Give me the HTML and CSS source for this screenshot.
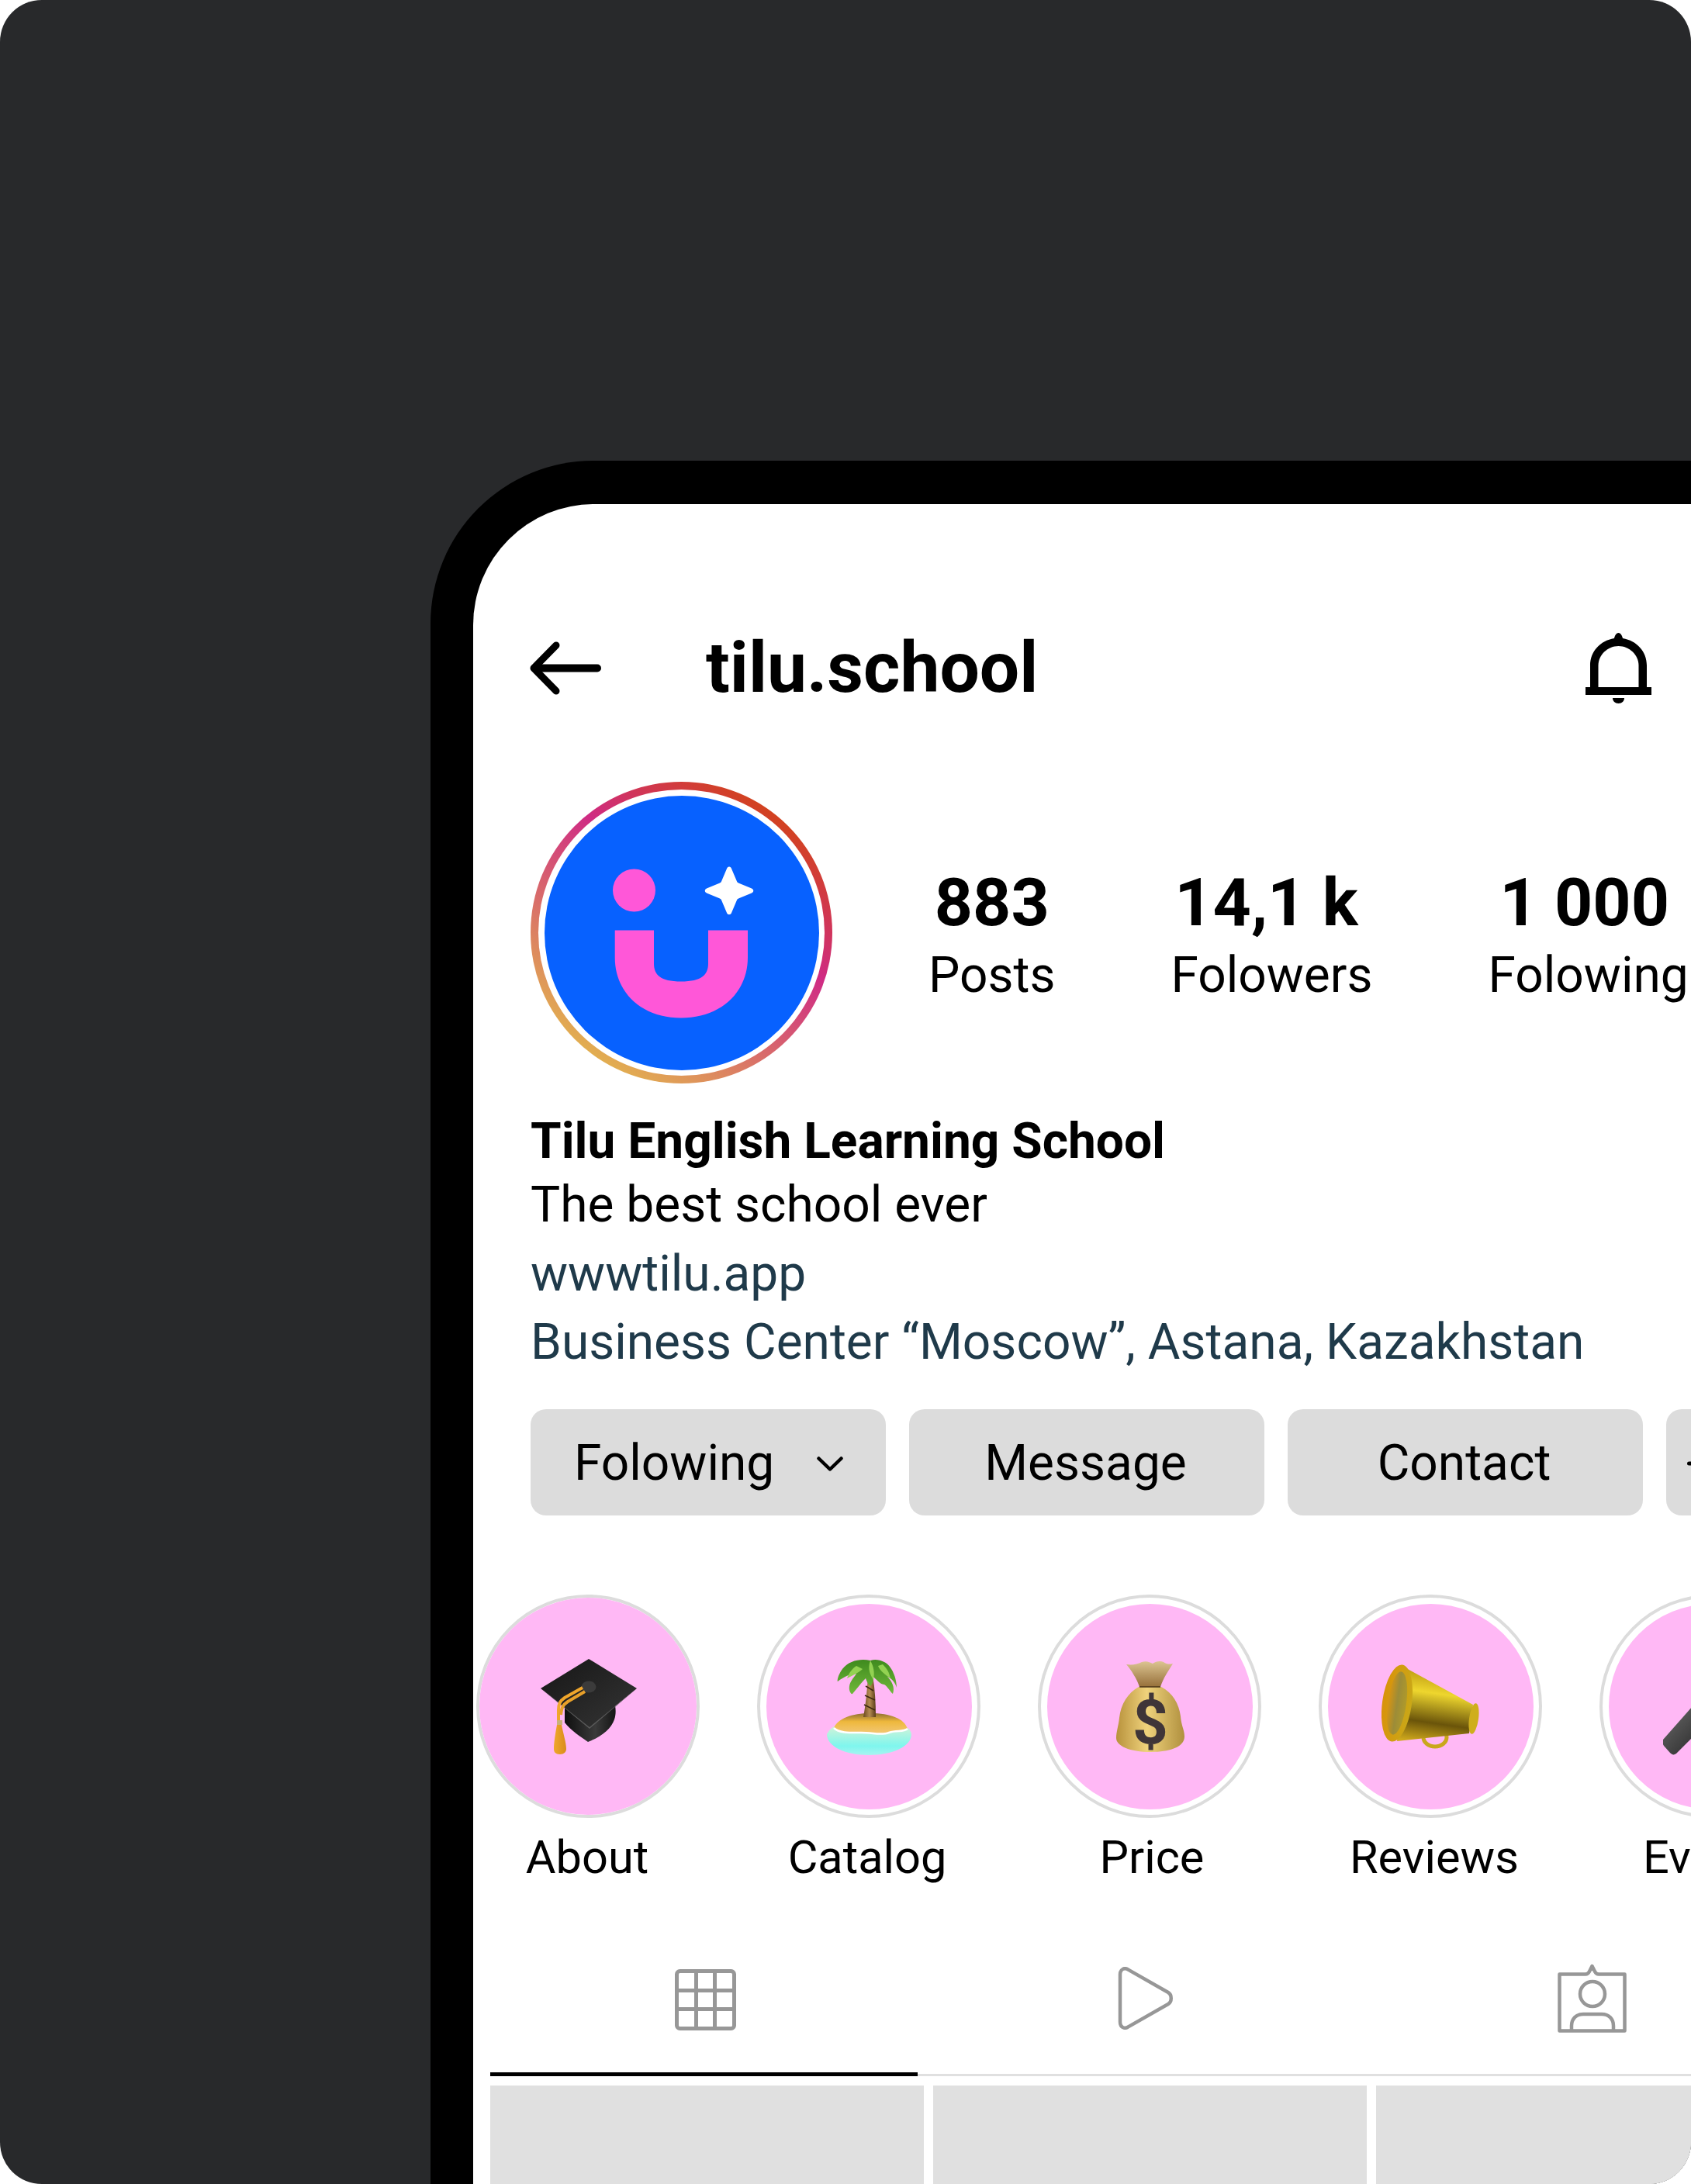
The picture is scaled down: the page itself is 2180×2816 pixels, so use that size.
FILE: index.html
```html
<!DOCTYPE html>
<html lang="en">
<head>
  <meta charset="UTF-8">
  <meta name="viewport" content="width=device-width, initial-scale=1.0">
  <title>tilu.school</title>
  <link rel="stylesheet" href="styles.css">
</head>
<body>
  <div class="stage">
    <div class="phone">
      <div class="screen">

        <div class="topbar">
          <svg class="icon-back" width="92" height="69" viewBox="0 0 92 69" fill="none" stroke="#000" stroke-width="10" stroke-linecap="round" stroke-linejoin="round">
            <path d="M87 34.5H6"/>
            <path d="M34 5L5 34.5L34 64" stroke-width="9"/>
          </svg>
          <h1 class="username">tilu.school</h1>
          <svg class="icon-bell" width="85" height="91" viewBox="0 0 85 91">
            <path d="M42.5 0C45 0 47 3 48 7C66 10 79 24 79 42V70H6V42C6 24 19 10 37 7C38 3 40 0 42.5 0Z" fill="#000"/>
            <path d="M42.5 17C29 17 16.500 28 16.500 42V70H68.500V42C68.500 28 56 17 42.5 17Z" fill="#fff"/>
            <rect x="0" y="70" width="85" height="10" fill="#000"/>
            <path d="M35 84H50C50 88 47 91 42.5 91C38 91 35 88 35 84Z" fill="#000"/>
          </svg>
        </div>

        <div class="profile">
          <div class="avatar-ring">
            <div class="avatar-gap">
              <svg class="avatar" width="354" height="354" viewBox="0 0 354 354">
                <circle cx="177" cy="177" r="177" fill="#0761ff"/>
                <circle cx="115.5" cy="122" r="27.5" fill="#ff57d8"/>
                <g transform="translate(0 -23.5)">
                  <path d="M90.7 197H141V240C141 254 149 263 176 263C203 263 211 254 211 240V197H262V232C262 278 226 310 176 310C126 310 90.7 278 90.7 232Z" fill="#ff57d8"/>
                  <path d="M238 115C239.5 115 240.5 116 241 117.5L248 134C248.5 135 249 135.5 250 136L267 143C270 144.5 270 147.5 267 149L250 156C249 156.5 248.5 157 248 158L241 174.5C240 177.5 236 177.5 235 174.5L228 158C227.5 157 227 156.5 226 156L209 149C206 147.5 206 144.5 209 143L226 136C227 135.5 227.5 135 228 134L235 117.5C235.5 116 236.5 115 238 115Z" fill="#fff"/>
                </g>
              </svg>
            </div>
          </div>
          <div class="stats">
            <div class="stat"><div class="stat-num">883</div><div class="stat-label">Posts</div></div>
            <div class="stat"><div class="stat-num stat-num-followers">14,1 k</div><div class="stat-label">Folowers</div></div>
            <div class="stat"><div class="stat-num stat-num-following">1 000</div><div class="stat-label">Folowing</div></div>
          </div>
        </div>

        <div class="bio">
          <div class="bio-name">Tilu English Learning School</div>
          <div class="bio-line">The best school ever</div>
          <div class="bio-link">wwwtilu.app</div>
          <div class="bio-link">Business Center “Moscow”, Astana, Kazakhstan</div>
        </div>

        <div class="actions">
          <div class="btn btn-drop">Folowing
            <svg width="34" height="19" viewBox="0 0 34 19" fill="none" stroke="#000" stroke-width="4.5" stroke-linecap="round" stroke-linejoin="round"><path d="M2.5 2.5L17 16.5L31.5 2.5"/></svg>
          </div>
          <div class="btn">Message</div>
          <div class="btn">Contact</div>
          <div class="btn btn-more">
            <svg width="44" height="44" viewBox="0 0 44 44" fill="none" stroke="#000" stroke-width="5" stroke-linecap="round"><path d="M2.5 22H41.5M22 2.5V41.5"/></svg>
          </div>
        </div>

        <div class="highlights">
          <div class="story">
            <div class="story-ring story-ring-seen">
              <div class="story-disc">
                <svg width="125" height="123" viewBox="0 0 125 123">
                  <defs>
                    <linearGradient id="capBoard" x1="0" y1="0" x2="1" y2="1"><stop offset="0" stop-color="#161616"/><stop offset="1" stop-color="#353535"/></linearGradient>
                    <linearGradient id="capBase" x1="0" y1="0" x2="1" y2="0"><stop offset="0" stop-color="#0f0f0f"/><stop offset="0.6" stop-color="#3a3a3a"/><stop offset="1" stop-color="#151515"/></linearGradient>
                    <linearGradient id="tassel" x1="0" y1="0" x2="1" y2="0"><stop offset="0" stop-color="#efa72c"/><stop offset="1" stop-color="#d98c1c"/></linearGradient>
                  </defs>
                  <path d="M32 62V82C40 92 52 100 62 107C80 100 92 90 96 78C98 72 98 66 97 60Z" fill="url(#capBase)"/>
                  <path d="M63 0L125 38L64 88L1 38Z" fill="url(#capBoard)"/>
                  <path d="M1 38L64 88L125 38L64 90Z" fill="#5a5a5a"/>
                  <ellipse cx="63" cy="36" rx="9.5" ry="7.5" fill="#3b3b3b"/>
                  <path d="M55 37L32 50C26 54 24 58 24 66V80" fill="none" stroke="#f0a62b" stroke-width="4"/>
                  <path d="M58 42L36 55C30 59 28 62 27 72" fill="none" stroke="#e8a02a" stroke-width="4"/>
                  <rect x="22" y="79" width="7" height="6" fill="#c9b17a"/>
                  <path d="M22 85H28C30 96 34 108 34 116C34 120 31 123 26 123C20 123 18 120 18 116C18 108 20 96 22 85Z" fill="url(#tassel)"/>
                </svg>
              </div>
            </div>
            <div class="story-label story-label-about">About</div>
          </div>
          <div class="story">
            <div class="story-ring">
              <div class="story-disc">
                <svg width="109" height="125" viewBox="0 0 109 125">
                  <defs>
                    <linearGradient id="sand" x1="0" y1="0" x2="0" y2="1"><stop offset="0" stop-color="#8f6f34"/><stop offset="0.4" stop-color="#eeb83c"/><stop offset="1" stop-color="#f3c878"/></linearGradient>
                    <linearGradient id="sea" x1="0" y1="0" x2="0" y2="1"><stop offset="0" stop-color="#d8f3d6"/><stop offset="0.7" stop-color="#7ef6ee"/><stop offset="1" stop-color="#a8f3f0"/></linearGradient>
                    <linearGradient id="trunk" x1="0" y1="0" x2="1" y2="0"><stop offset="0" stop-color="#6c4a1f"/><stop offset="0.5" stop-color="#b48b52"/><stop offset="1" stop-color="#5a3c18"/></linearGradient>
                    <linearGradient id="palm" x1="0" y1="0" x2="0" y2="1"><stop offset="0" stop-color="#3f8a1e"/><stop offset="1" stop-color="#6fb83a"/></linearGradient>
                  </defs>
                  <path d="M0 98C4 90 10 86 20 86H90C100 86 108 90 109 98C109 114 84 125 54 125C24 125 0 114 0 98Z" fill="url(#sea)"/>
                  <path d="M9 90C14 78 32 71 56 71C82 71 100 78 104 91C98 96 90 92 80 96C70 100 60 96 44 96C30 96 14 96 9 90Z" fill="url(#sand)"/>
                  <path d="M9 90C16 97 32 96 44 96C60 96 70 100 80 96C90 92 98 96 104 91" fill="none" stroke="#fff" stroke-width="2.5"/>
                  <path d="M53 22H59C62 40 63 58 63 76H47C50 60 52 40 53 22Z" fill="url(#trunk)"/>
                  <path d="M50 36L60 42M49 48L62 54M48 60L62 67" stroke="#3c2810" stroke-width="1.5"/>
                  <path d="M56 3C44 0 28 3 20 14C14 22 13 30 14 30C22 24 30 20 38 20C34 26 30 30 29 36C28 42 31 47 33 46C40 38 44 32 50 26C52 32 54 34 56 36C60 32 60 28 60 24C66 30 70 34 74 34C78 36 82 44 85 46C88 38 84 30 78 24C84 26 88 32 90 38C90 26 84 10 74 5C68 2 62 1 56 3Z" fill="url(#palm)"/>
                  <path d="M56 3C60 10 62 18 60 28C56 22 52 14 56 3ZM38 10C32 14 28 20 26 26C34 22 42 18 46 14ZM72 8C78 14 80 18 82 26C76 22 68 16 66 10Z" fill="#93d252"/>
                </svg>
              </div>
            </div>
            <div class="story-label story-label-catalog">Catalog</div>
          </div>
          <div class="story">
            <div class="story-ring">
              <div class="story-disc">
                <svg class="bag" width="89" height="119" viewBox="0 0 89 119">
                  <defs>
                    <linearGradient id="bag" x1="0" y1="0" x2="1" y2="0"><stop offset="0" stop-color="#b8923c"/><stop offset="0.45" stop-color="#efd27c"/><stop offset="1" stop-color="#b0903e"/></linearGradient>
                    <linearGradient id="bagTop" x1="0" y1="0" x2="0" y2="1"><stop offset="0" stop-color="#dcc492"/><stop offset="1" stop-color="#96703a"/></linearGradient>
                  </defs>
                  <path d="M14 5C22 6 28 5 34 2C40 0 44 2 48 4C52 1 58 0 62 2C66 5 70 5 74 4C68 14 62 22 58 34H31C28 24 20 12 14 5Z" fill="url(#bagTop)"/>
                  <path d="M30 34H59C74 42 82 56 84 72C85 84 89 90 89 98C89 110 74 118 46 118C18 118 1 110 1 100C1 92 4 84 5 74C7 56 16 42 30 34Z" fill="url(#bag)"/>
                  <path d="M31 34H58" stroke="#4a3418" stroke-width="1.5"/>
                  <text class="bag-dollar" x="45" y="107" text-anchor="middle">$</text>
                </svg>
              </div>
            </div>
            <div class="story-label story-label-price">Price</div>
          </div>
          <div class="story">
            <div class="story-ring">
              <div class="story-disc">
                <svg width="126" height="109" viewBox="0 0 126 109">
                  <defs>
                    <linearGradient id="cone" x1="0.35" y1="0" x2="0.2" y2="1"><stop offset="0" stop-color="#b8940f"/><stop offset="0.32" stop-color="#eed62e"/><stop offset="0.72" stop-color="#6a540a"/><stop offset="1" stop-color="#d0a91c"/></linearGradient>
                    <linearGradient id="rim" x1="0" y1="0" x2="1" y2="0"><stop offset="0" stop-color="#d9920a"/><stop offset="1" stop-color="#c9a818"/></linearGradient>
                    <linearGradient id="mouth" x1="0" y1="0" x2="1" y2="0"><stop offset="0" stop-color="#d89412"/><stop offset="0.5" stop-color="#9c8c38"/><stop offset="1" stop-color="#b09a2a"/></linearGradient>
                  </defs>
                  <ellipse cx="69" cy="94" rx="15" ry="12" fill="none" stroke="#c9a71c" stroke-width="5"/>
                  <path d="M30 4L118 52L113 89L20 99Z" fill="url(#cone)"/>
                  <ellipse cx="20" cy="50" rx="19" ry="50" transform="rotate(8 20 50)" fill="url(#rim)"/>
                  <ellipse cx="20" cy="50" rx="12" ry="41" transform="rotate(8 20 50)" fill="url(#mouth)"/>
                  <ellipse cx="119" cy="70" rx="6" ry="20" transform="rotate(8 119 70)" fill="#cfae1c"/>
                </svg>
              </div>
            </div>
            <div class="story-label story-label-reviews">Reviews</div>
          </div>
          <div class="story">
            <div class="story-ring">
              <div class="story-disc">
                <svg width="125" height="125" viewBox="0 0 125 125">
                  <defs>
                    <linearGradient id="rod" x1="0" y1="0" x2="1" y2="1"><stop offset="0" stop-color="#6b6b6b"/><stop offset="1" stop-color="#232323"/></linearGradient>
                  </defs>
                  <path d="M0 105L38 62L58 82L17 123C14 125 12 125 9 122L1 113C-1 110 -1 108 0 105Z" fill="url(#rod)"/>
                </svg>
              </div>
            </div>
            <div class="story-label">Events</div>
          </div>
        </div>

        <div class="tabs">
          <div class="tab tab-grid">
            <svg width="79" height="79" viewBox="0 0 79 79" fill="none" stroke="#979797" stroke-width="5">
              <rect x="2.5" y="2.5" width="74" height="74" rx="4"/>
              <path d="M27.5 3V76M51.5 3V76M3 27.5H76M3 51.5H76"/>
            </svg>
          </div>
          <div class="tab tab-play">
            <svg width="71" height="81" viewBox="0 0 71 81" fill="none" stroke="#979797" stroke-width="4.5">
              <path d="M3 10C3 3 9 0 14 4L65 33C70 36 70 45 65 48L14 77C9 81 3 78 3 71Z"/>
            </svg>
          </div>
          <div class="tab tab-tagged">
            <svg width="89" height="89" viewBox="0 0 89 89" fill="none" stroke="#979797" stroke-width="4.5" stroke-linejoin="round">
              <path d="M2.5 13.5H36C39 13.5 40 12 41 10L44.5 3L48 10C49 12 50 13.5 53 13.5H86.5V86.5H2.5Z"/>
              <ellipse cx="45" cy="39" rx="16" ry="16"/>
              <path d="M18 86V80C18 71 24 65 33 65H57C66 65 72 71 72 80V86"/>
            </svg>
          </div>
        </div>

        <div class="tiles">
          <div class="tile"></div>
          <div class="tile"></div>
          <div class="tile"></div>
        </div>

      </div>
    </div>
  </div>
</body>
</html>
```

FILE: styles.css
```css
body {
  margin: 0;
  background: #fff;
  font-family: Roboto, "Liberation Sans", sans-serif;
  color: #000;
}
.stage {
  width: 2180px;
  height: 2816px;
  box-sizing: border-box;
  background: #28292b;
  border-radius: 54px;
  overflow: hidden;
  padding: 594px 0 0 555px;
}
.phone {
  height: 2222px;
  box-sizing: border-box;
  background: #000;
  border-radius: 210px 0 0 0;
  padding: 56px 0 0 55px;
}
.screen {
  height: 2166px;
  background: #fff;
  border-radius: 156px 0 0 0;
  overflow: hidden;
}

/* header */
.topbar {
  display: flex;
  align-items: center;
  height: 92px;
  padding: 165px 0 0 73px;
}
.username {
  flex: 0 0 auto;
  width: 1134px;
  margin: 0 0 0 135px;
  font-size: 91px;
  font-weight: 700;
  line-height: 92px;
}
.icon-back {
  flex: 0 0 auto;
}
.icon-bell {
  flex: 0 0 auto;
}

/* avatar + counters */
.profile {
  display: flex;
  align-items: center;
  margin: 101px 0 0 74px;
}
.avatar-ring {
  flex: 0 0 auto;
  width: 389px;
  height: 389px;
  box-sizing: border-box;
  padding: 10px;
  border-radius: 50%;
  background: linear-gradient(215deg, #d2421f 14%, #cf2b84 40%, #e3b44e 88%);
}
.avatar-gap {
  width: 369px;
  height: 369px;
  box-sizing: border-box;
  padding: 7.5px;
  border-radius: 50%;
  background: #fff;
}
.avatar {
  display: block;
}
.stats {
  display: flex;
  gap: 149px;
  margin: 5px 0 0 124px;
}
.stat {
  text-align: center;
  white-space: nowrap;
}
.stat-num {
  font-size: 86px;
  font-weight: 700;
  line-height: 100px;
}
.stat-num-followers {
  padding-right: 14px;
}
.stat-num-following {
  padding-right: 10px;
}
.stat-label {
  margin-top: 6px;
  font-size: 64px;
  line-height: 76px;
}

/* bio */
.bio {
  margin: 38px 0 0 74px;
  font-size: 64px;
  white-space: nowrap;
}
.bio-name {
  font-weight: 700;
  line-height: 74px;
}
.bio-line {
  line-height: 90px;
}
.bio-link {
  color: #1f3a4a;
  line-height: 88px;
}

/* buttons */
.actions {
  display: flex;
  gap: 30px;
  margin: 42px 0 0 74px;
}
.btn {
  flex: 0 0 458px;
  height: 137px;
  box-sizing: border-box;
  padding: 2px 3px 0 0;
  display: flex;
  align-items: center;
  justify-content: center;
  background: #dcdcdc;
  border-radius: 20px;
  font-size: 64px;
}
.btn-drop {
  justify-content: flex-start;
  padding-left: 56px;
}
.btn-drop svg {
  margin-left: 55px;
  margin-top: 2px;
}
.btn-more {
  justify-content: flex-start;
  padding-left: 27px;
}

/* highlights */
.highlights {
  display: flex;
  gap: 74px;
  margin: 102px 0 0 4px;
}
.story {
  flex: 0 0 288px;
}
.story-ring {
  width: 288px;
  height: 288px;
  box-sizing: border-box;
  padding: 7.5px;
  border-radius: 50%;
  border: 4.5px solid #dcdcdc;
}
.story-ring-seen {
  padding: 0;
}
.story-disc {
  width: 100%;
  height: 100%;
  display: flex;
  align-items: center;
  justify-content: center;
  background: #ffb8f5;
  border-radius: 50%;
}
.story-label {
  margin-top: 14.5px;
  font-size: 59.5px;
  line-height: 72px;
  text-align: center;
  white-space: nowrap;
}
.story-label-about {
  padding-right: 2px;
}
.story-label-catalog {
  padding-right: 4px;
}
.story-label-price {
  padding-left: 6px;
}
.story-label-reviews {
  padding-left: 10px;
}
.bag {
  overflow: visible;
}
.bag-dollar {
  font-family: Roboto, "Liberation Sans", sans-serif;
  font-size: 80px;
  font-weight: 700;
  fill: #3f3538;
}

/* tabs */
.tabs {
  display: flex;
  margin: 47.5px 0 0 22px;
  height: 196px;
  width: 1570px;
  border-bottom: 3px solid #e0e0e0;
}
.tab {
  display: flex;
  align-items: center;
  justify-content: center;
  box-sizing: border-box;
  height: 193px;
  padding-top: 4px;
}
.tab-grid {
  flex: 0 0 551px;
  height: 199px;
  padding: 6px 0 0 4px;
  border-bottom: 5px solid #000;
}
.tab-play {
  flex: 0 0 586px;
}
.tab-tagged {
  flex: 0 0 566px;
}

/* posts */
.tiles {
  display: flex;
  gap: 12px;
  margin: 12px 0 0 22px;
}
.tile {
  flex: 0 0 559px;
  height: 300px;
  background: #e0e0e0;
}
```
